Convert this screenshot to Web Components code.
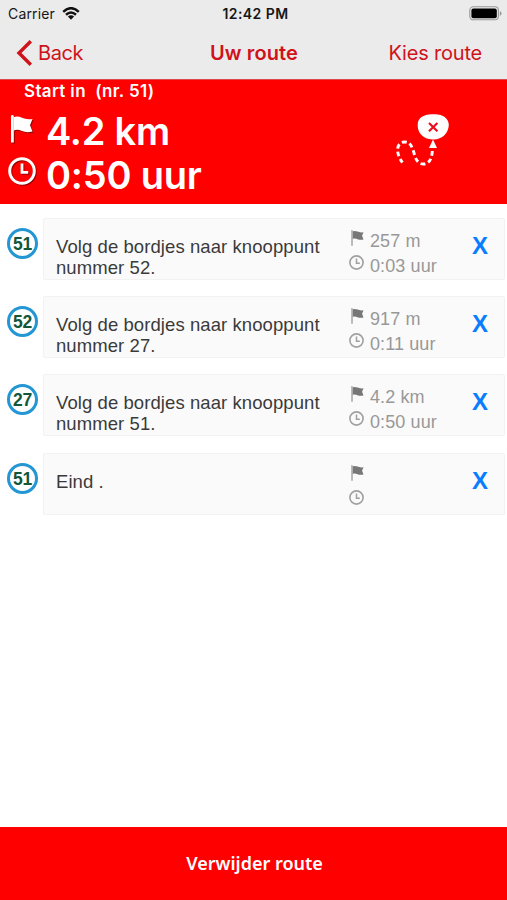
<!DOCTYPE html>
<html lang="nl">
<head>
<meta charset="utf-8">
<title>Uw route</title>
<style>
	body {
		margin: 0;
		background: #fff;
		font-family: Inter, "Liberation Sans", sans-serif;
	}
</style>
</head>
<body>
<route-app>
	<status-bar slot="top" carrier="Carrier" time="12:42 PM"></status-bar>
	<nav-bar slot="top">
		<span slot="back">Back</span>
		<span slot="title">Uw route</span>
		<span slot="action">Kies route</span>
	</nav-bar>
	<route-summary slot="top">
		<span slot="start">Start in&nbsp; (nr. 51)</span>
		<span slot="distance">4.2 km</span>
		<span slot="duration">0:50 uur</span>
	</route-summary>
	<route-step node="51" distance="257 m" duration="0:03 uur">Volg de bordjes naar knooppunt<br>nummer 52.</route-step>
	<route-step node="52" distance="917 m" duration="0:11 uur">Volg de bordjes naar knooppunt<br>nummer 27.</route-step>
	<route-step node="27" distance="4.2 km" duration="0:50 uur">Volg de bordjes naar knooppunt<br>nummer 51.</route-step>
	<route-step node="51" distance="" duration="">Eind .</route-step>
	<footer-button slot="bottom">Verwijder route</footer-button>
</route-app>

<script>
const define = (name, style, html, setup) => {
	const template = document.createElement('template');
	template.innerHTML = `<style>${style}</style>${html}`;

	window.customElements.define(name, class extends HTMLElement {
		constructor() {
			super();
			this.attachShadow({ mode: 'open' }).appendChild(template.content.cloneNode(true));
		}

		connectedCallback() {
			if (setup) {
				setup(this, this.shadowRoot);
			}
		}
	});
};

// flag and clock, shared by the summary and the steps
define('flag-icon', `
:host { display: block; }
svg { display: block; width: 100%; height: 100%; }
`, `
<svg viewBox="0 0 22 28">
	<path fill="currentColor" d="M0 0.5Q1.4-.4 2.8.8V27.5H0z"/>
	<path fill="var(--flag-fill, currentColor)" d="M2.8 2Q7 .8 11 2.8T21.5 4L19 10.2 21.5 16.5Q15.5 18 11 16T2.8 15.5z"/>
</svg>
`);

define('clock-icon', `
:host { display: block; }
svg { display: block; width: 100%; height: 100%; }
`, `
<svg viewBox="0 0 28 28" fill="none" stroke="currentColor">
	<circle cx="14" cy="14" r="12.3" stroke-width="3"/>
	<path stroke-width="2.8" d="M14 6.5V15.3H20.2"/>
</svg>
`);

define('status-bar', `
:host {
	display: grid;
	grid-template-columns: 1fr auto 1fr;
	align-items: center;
	height: 28px;
	color: #161616;
	background: #ebebeb;
	font-size: 14px;
	line-height: 28px;
}

.left { display: flex; align-items: center; gap: 7px; padding-left: 8px; }
#carrier { letter-spacing: 0.15px; }
#time { font-weight: 600; letter-spacing: 0.45px; padding-left: 4px; }
.wifi { width: 18px; height: 13px; margin-bottom: 2px; }
.battery { justify-self: end; width: 33px; height: 15px; margin: 0 5px 2px 0; }
`, `
<div class="left">
	<span id="carrier"></span>
	<svg class="wifi" viewBox="0 0 18 13" fill="none" stroke="#111" stroke-width="2.5">
		<path d="M1.2 4.8Q9-2.4 16.8 4.8"/>
		<path d="M4 7.7Q9 3.2 14 7.7"/>
		<path fill="#111" stroke="none" d="M5.9 9.5Q9 6.9 12.1 9.5L9 12.8z"/>
	</svg>
</div>
<span id="time"></span>
<svg class="battery" viewBox="0 0 33 15">
	<rect x="0.8" y="0.8" width="28.6" height="13" rx="3.5" fill="none" stroke="#999" stroke-width="1.1"/>
	<rect x="2.4" y="2.4" width="25.4" height="9.8" rx="2" fill="#000"/>
	<path fill="#999" d="M30.8 5Q32.6 5.8 32.6 7.4T30.8 9.8z"/>
</svg>
`, (host, root) => {
	root.getElementById('carrier').textContent = host.getAttribute('carrier');
	root.getElementById('time').textContent = host.getAttribute('time');
});

define('nav-bar', `
:host {
	display: grid;
	grid-template-columns: 1fr auto 1fr;
	align-items: center;
	box-sizing: border-box;
	height: 52px;
	padding: 0 25px 2px 16px;
	border-bottom: 1px solid #e0454c;
	color: #d0121b;
	background: #ebebeb;
	font-size: 20px;
	line-height: 24px;
}

.back { display: flex; align-items: center; gap: 5px; letter-spacing: -0.4px; }
.back svg { width: 17px; height: 26px; }
.title { font-weight: 600; letter-spacing: 0.1px; padding-left: 10px; }
.action { justify-self: end; letter-spacing: -0.2px; }
`, `
<div class="back">
	<svg viewBox="0 0 17 26" fill="none" stroke="currentColor" stroke-width="3.4"><path d="M14.8 1.3 3 13 14.8 24.7"/></svg>
	<slot name="back"></slot>
</div>
<div class="title"><slot name="title"></slot></div>
<div class="action"><slot name="action"></slot></div>
`);

define('route-summary', `
:host {
	display: flex;
	justify-content: space-between;
	box-sizing: border-box;
	height: 124px;
	padding-right: 57px;
	color: #fff;
	background: #f00;
	font-weight: 600;
}

.start { height: 24px; padding-left: 24px; font-size: 17px; line-height: 22px; letter-spacing: 0.35px; white-space: nowrap; }
.line { display: flex; height: 44px; line-height: 54px; font-size: 38px; letter-spacing: -0.2px; white-space: nowrap; }
.line flag-icon { width: 22px; height: 28px; margin: 11px 13px 0 11px; --flag-fill: #fff; }
.line clock-icon { width: 28px; height: 28px; margin: 9px 10px 0 8px; }
.icon { filter: drop-shadow(1px 1px 0.5px rgba(90, 0, 0, 0.65)); }
.balloon { width: 54px; height: 54px; margin-top: 33px; }
`, `
<div>
	<div class="start"><slot name="start"></slot></div>
	<div class="line"><flag-icon class="icon"></flag-icon><slot name="distance"></slot></div>
	<div class="line"><clock-icon class="icon"></clock-icon><slot name="duration"></slot></div>
</div>
<svg class="balloon" viewBox="0 0 54 54" fill="none">
	<path fill="#fff" d="M36 1.3C46 .2 53 5 52.8 12 52.6 20 46 27 36.5 26.5 27 26 21.5 20 21.7 12 21.9 4.5 27 1.8 36 1.3z"/>
	<path stroke="#e8101c" stroke-width="2.2" d="M33 10 41.4 18.2M41.4 10 33 18.2"/>
	<path fill="#fff" d="M37 26.5 41 35H33z"/>
	<path stroke="#fff" stroke-width="2.9" stroke-dasharray="4.7 3.1" d="M36.3 38C36 46 33 51 27.5 51 15 51 21 29 8.5 29 0 29-.5 41 6.5 49.5"/>
</svg>
`);

define('route-step', `
:host {
	display: grid;
	grid-template-columns: 43px 1fr;
	height: 62px;
	font-family: "Liberation Sans", Arial, sans-serif;
}

#node {
	box-sizing: border-box;
	width: 31px;
	height: 31px;
	margin: 10px 0 0 7px;
	border: 3px solid #2396d3;
	border-radius: 50%;
	color: #12573a;
	font-size: 17.5px;
	font-weight: bold;
	letter-spacing: -0.2px;
	line-height: 26px;
	text-align: center;
}

.card {
	display: grid;
	grid-template-columns: 294px 1fr 44px;
	box-sizing: border-box;
	margin-right: 2px;
	border: 1px solid #f2f2f2;
	border-radius: 2px;
	background: #fafafa;
}

.text { padding: 17px 0 0 12px; color: #3a3a3a; font-size: 18.5px; line-height: 21px; letter-spacing: 0.08px; white-space: nowrap; }
.facts { display: grid; grid-template-rows: 24px 25px; padding: 10px 0 0 11px; color: #989898; font-size: 18px; letter-spacing: 0.1px; white-space: nowrap; }
.fact { display: flex; line-height: 25px; }
.fact:last-child { line-height: 26px; }
flag-icon { width: 13px; height: 16px; margin: 1px 6px 0 2px; color: #aaa; --flag-fill: #777; }
clock-icon { width: 15px; height: 15px; margin: 2px 6px 0 0; color: #a0a0a0; }
.remove { padding: 11px 0 0 12px; color: #087dff; font-size: 24px; font-weight: bold; line-height: 32px; }
`, `
<div id="node"></div>
<div class="card">
	<div class="text"><slot></slot></div>
	<div class="facts">
		<div class="fact"><flag-icon></flag-icon><span id="distance"></span></div>
		<div class="fact"><clock-icon></clock-icon><span id="duration"></span></div>
	</div>
	<div class="remove">X</div>
</div>
`, (host, root) => {
	['node', 'distance', 'duration'].forEach(name => {
		root.getElementById(name).textContent = host.getAttribute(name);
	});
});

define('footer-button', `
:host {
	display: block;
	height: 73px;
	padding-left: 2px;
	color: #fff;
	background: #f00;
	font-family: "Noto Sans", "Open Sans", sans-serif;
	font-size: 18px;
	font-weight: 600;
	line-height: 73px;
	text-align: center;
}
`, `<slot></slot>`);

define('route-app', `
:host {
	display: flex;
	flex-direction: column;
	width: 507px;
	height: 900px;
	overflow: hidden;
}

.steps { display: flex; flex: 1; flex-direction: column; gap: 16.2px; padding-top: 14px; }
`, `
<slot name="top"></slot>
<div class="steps"><slot></slot></div>
<slot name="bottom"></slot>
`);
</script>
</body>
</html>
